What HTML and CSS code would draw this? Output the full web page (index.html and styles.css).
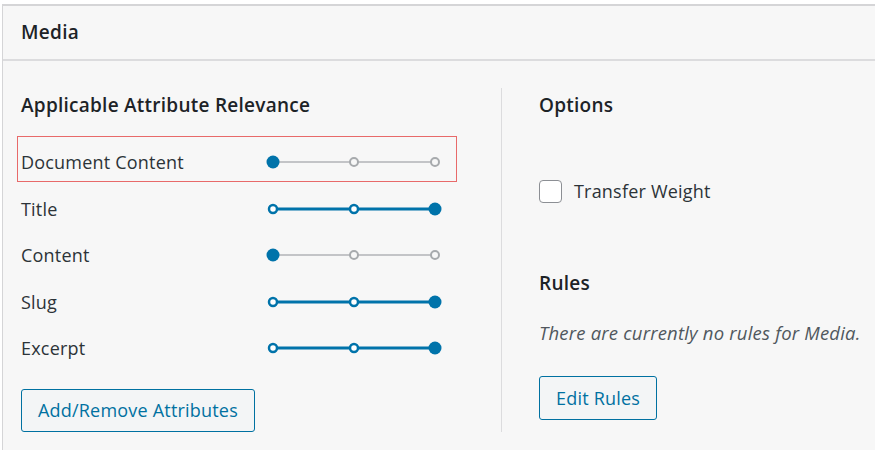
FILE: index.html
```html
<!DOCTYPE html>
<html>
<head>
<meta charset="utf-8">
<link rel="stylesheet" href="styles.css">
</head>
<body>
<div class="card">
  <div class="card-header">Media</div>
  <div class="card-body">
    <div class="col-left">
      <h3 class="section-title">Applicable Attribute Relevance</h3>
      <div class="rows">
        <div class="row">
          <span class="label">Document Content</span>
          <svg class="slider" width="180" height="20" viewBox="0 0 180 20">
            <line x1="7" y1="10" x2="169" y2="10" stroke="#c3c4c7" stroke-width="2"/>
            <circle cx="88" cy="10" r="4" fill="#f7f7f7" stroke="#a7aaad" stroke-width="2"/>
            <circle cx="169" cy="10" r="4" fill="#f7f7f7" stroke="#a7aaad" stroke-width="2"/>
            <circle cx="7" cy="10" r="6.5" fill="#0073aa"/>
          </svg>
          <span class="annot"></span>
        </div>
        <div class="row">
          <span class="label">Title</span>
          <svg class="slider" width="180" height="20" viewBox="0 0 180 20">
            <line x1="7" y1="10" x2="169" y2="10" stroke="#0073aa" stroke-width="3"/>
            <circle cx="7" cy="10" r="4" fill="#fff" stroke="#0073aa" stroke-width="2.5"/>
            <circle cx="88" cy="10" r="4" fill="#fff" stroke="#0073aa" stroke-width="2.5"/>
            <circle cx="169" cy="10" r="6.5" fill="#0073aa"/>
          </svg>
        </div>
        <div class="row">
          <span class="label">Content</span>
          <svg class="slider" width="180" height="20" viewBox="0 0 180 20">
            <line x1="7" y1="10" x2="169" y2="10" stroke="#c3c4c7" stroke-width="2"/>
            <circle cx="88" cy="10" r="4" fill="#f7f7f7" stroke="#a7aaad" stroke-width="2"/>
            <circle cx="169" cy="10" r="4" fill="#f7f7f7" stroke="#a7aaad" stroke-width="2"/>
            <circle cx="7" cy="10" r="6.5" fill="#0073aa"/>
          </svg>
        </div>
        <div class="row">
          <span class="label">Slug</span>
          <svg class="slider" width="180" height="20" viewBox="0 0 180 20">
            <line x1="7" y1="10" x2="169" y2="10" stroke="#0073aa" stroke-width="3"/>
            <circle cx="7" cy="10" r="4" fill="#fff" stroke="#0073aa" stroke-width="2.5"/>
            <circle cx="88" cy="10" r="4" fill="#fff" stroke="#0073aa" stroke-width="2.5"/>
            <circle cx="169" cy="10" r="6.5" fill="#0073aa"/>
          </svg>
        </div>
        <div class="row">
          <span class="label">Excerpt</span>
          <svg class="slider" width="180" height="20" viewBox="0 0 180 20">
            <line x1="7" y1="10" x2="169" y2="10" stroke="#0073aa" stroke-width="3"/>
            <circle cx="7" cy="10" r="4" fill="#fff" stroke="#0073aa" stroke-width="2.5"/>
            <circle cx="88" cy="10" r="4" fill="#fff" stroke="#0073aa" stroke-width="2.5"/>
            <circle cx="169" cy="10" r="6.5" fill="#0073aa"/>
          </svg>
        </div>
      </div>
      <button class="btn btn-attrs">Add/Remove Attributes</button>
    </div>
    <div class="col-right">
      <h3 class="section-title">Options</h3>
      <label class="check-row">
        <span class="checkbox"></span>
        <span class="check-label">Transfer Weight</span>
      </label>
      <h3 class="section-title rules-title">Rules</h3>
      <p class="no-rules">There are currently no rules for Media.</p>
      <button class="btn btn-rules">Edit Rules</button>
    </div>
  </div>
</div>
</body>
</html>
```

FILE: styles.css
```css
html, body {
  margin: 0;
  padding: 0;
  background: #ffffff;
  overflow: hidden;
  width: 875px;
  height: 450px;
}

body {
  font-family: "Open Sans", "Noto Sans", sans-serif;
  font-size: 18px;
  letter-spacing: 0.2px;
  color: #2c3338;
}

.card {
  margin: 4px 0 0 2px;
  width: 873px;
  height: 446px;
  background: #f7f7f7;
  border: 1px solid #d5d5d7;
  border-top-width: 2px;
  border-right: none;
  border-bottom: none;
  box-sizing: border-box;
}

.card-header {
  height: 53px;
  line-height: 53px;
  padding-left: 18px;
  font-size: 19px;
  font-weight: 600;
  letter-spacing: 0.3px;
  color: #1d2327;
  border-bottom: 2px solid #dcdcde;
}

.card-body {
  display: flex;
  padding-top: 27px;
}

.col-left {
  width: 480px;
  padding-left: 18px;
  display: flex;
  flex-direction: column;
}

.col-right {
  border-left: 1px solid #dcdcde;
  padding-left: 37px;
  height: 344px;
  display: flex;
  flex-direction: column;
  align-items: flex-start;
}

.section-title {
  margin: 0;
  height: 34px;
  line-height: 34px;
  font-size: 19px;
  font-weight: 600;
  letter-spacing: 0.25px;
  color: #1d2327;
}

.rows {
  margin-top: 17px;
  display: flex;
  flex-direction: column;
}

.row {
  position: relative;
  height: 46.5px;
  display: flex;
  align-items: center;
}

.label {
  width: 245px;
}

.slider {
  display: block;
}

.annot {
  position: absolute;
  left: -4px;
  top: -3px;
  width: 438px;
  height: 44px;
  border: 1px solid #e86a6a;
  pointer-events: none;
}

.btn {
  font-family: inherit;
  font-size: 18px;
  letter-spacing: 0.2px;
  color: #0071a1;
  background: #f3f5f6;
  border: 1px solid #0071a1;
  border-radius: 3px;
  height: 44px;
  padding: 0 16px;
  cursor: pointer;
}

.btn-attrs {
  margin-top: 17px;
  align-self: flex-start;
  height: 43px;
}

.btn-rules {
  margin-top: 31px;
}

.check-row {
  margin-top: 57px;
  height: 24px;
  display: flex;
  align-items: center;
  gap: 12px;
}

.checkbox {
  width: 21px;
  height: 21px;
  border: 1.5px solid #8c8f94;
  border-radius: 4px;
  background: #fff;
}

.rules-title {
  margin-top: 63px;
}

.no-rules {
  margin: 21px 0 0 0;
  line-height: 24px;
  font-size: 18.5px;
  font-style: italic;
  color: #50575e;
}
```
